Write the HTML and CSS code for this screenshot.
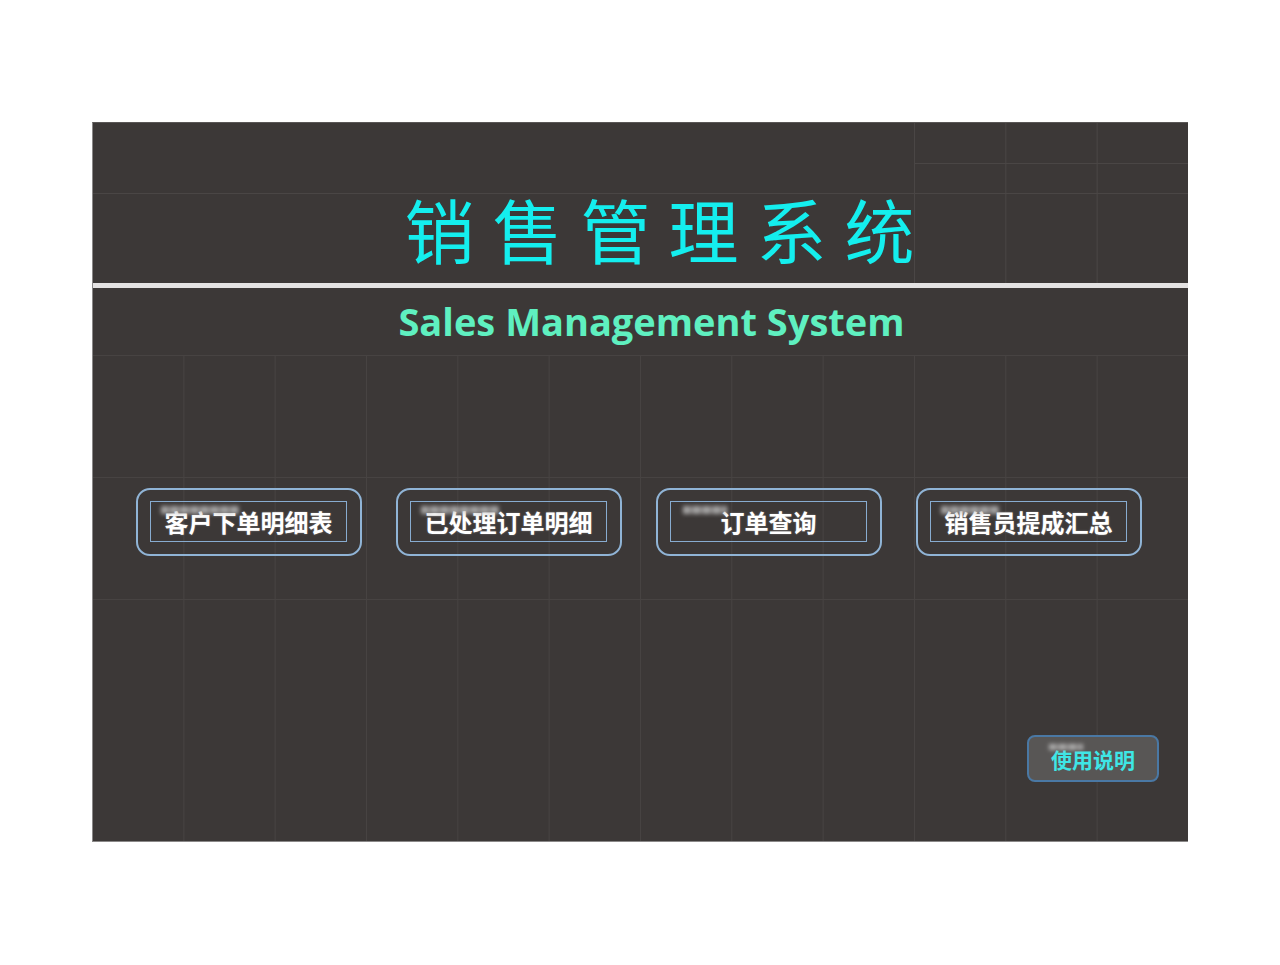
FILE: index.html
```html
<!DOCTYPE html>
<html lang="zh-CN">
<head>
<meta charset="utf-8">
<title>销售管理系统</title>
<link rel="stylesheet" href="styles.css">
</head>
<body>
<div class="panel">
  <header class="head">
    <div class="corner-grid"></div>
    <h1 class="title">销售管理系统</h1>
  </header>
  <div class="rule"></div>
  <div class="sub">
    <h2 class="subtitle">Sales Management System</h2>
  </div>
  <main class="body">
    <nav class="menu">
      <a class="btn"><span class="inner"><span class="ghost w1"></span>客户下单明细表</span></a>
      <a class="btn"><span class="inner"><span class="ghost w1"></span>已处理订单明细</span></a>
      <a class="btn"><span class="inner"><span class="ghost w2"></span>订单查询</span></a>
      <a class="btn"><span class="inner"><span class="ghost w3"></span>销售员提成汇总</span></a>
    </nav>
    <div class="help-row">
      <a class="help"><span class="ghost small"></span>使用说明</a>
    </div>
  </main>
</div>
</body>
</html>
```
FILE: styles.css
```css
* { box-sizing: border-box; }
html, body { margin: 0; padding: 0; background: #ffffff; }
body {
  font-family: "Noto Sans CJK SC", "Noto Sans", sans-serif;
  height: 965px;
  padding-top: 122px;
  padding-left: 92px;
}
.panel {
  width: 1096px;
  height: 720px;
  background: #3c3837;
  display: flex;
  flex-direction: column;
  border-left: 1px solid #8a8888;
  border-bottom: 1px solid #8a8888;
  border-top: 1px solid #5a5756;
}
.head {
  position: relative;
  height: 160px;
  display: flex;
  align-items: center;
  justify-content: center;
  background-image: linear-gradient(#4a4645, #4a4645);
  background-size: 100% 1px;
  background-position: 0 70px;
  background-repeat: no-repeat;
}
.corner-grid {
  position: absolute;
  right: 0;
  top: 0;
  width: 274px;
  height: 160px;
  background-image:
    linear-gradient(90deg, #4a4645 1px, transparent 1px),
    linear-gradient(#4a4645 1px, transparent 1px);
  background-size: 91.33px 100%, 100% 41px;
  background-repeat: repeat-x, no-repeat;
  background-position: 0 0, 0 40px;
}
.title {
  position: relative;
  margin: 0;
  padding-left: 56px;
  padding-top: 52px;
  font-weight: 400;
  font-size: 70px;
  line-height: 1;
  letter-spacing: 18px;
  color: #14eeee;
}
.rule {
  height: 5px;
  background: #e4e2e2;
}
.sub {
  height: 67px;
  display: flex;
  align-items: center;
  justify-content: center;
}
.subtitle {
  margin: 0;
  padding-left: 22px;
  padding-bottom: 2px;
  font-family: "Open Sans", "Noto Sans", sans-serif;
  font-weight: 700;
  font-size: 38px;
  line-height: 1;
  color: #5ff0c0;
}
.body {
  flex: 1;
  display: flex;
  flex-direction: column;
  background-image:
    linear-gradient(90deg, transparent 90.33px, #474342 90.33px, #474342 91.33px),
    linear-gradient(#474342 1px, transparent 1px),
    linear-gradient(#474342 1px, transparent 1px),
    linear-gradient(#474342 1px, transparent 1px);
  background-size: 91.33px 100%, 100% 1px, 100% 1px, 100% 1px;
  background-repeat: repeat-x, no-repeat, no-repeat, no-repeat;
  background-position: 0 0, 0 0, 0 122px, 0 244px;
}
.menu {
  display: flex;
  gap: 34px;
  padding-left: 43px;
  padding-top: 133px;
}
.btn {
  width: 226px;
  height: 68px;
  border: 2px solid #90b4d6;
  border-radius: 14px;
  padding: 11px 13px 12px 12px;
  display: flex;
}
.inner {
  position: relative;
  flex: 1;
  border: 1.5px solid #88acd0;
  display: flex;
  align-items: center;
  justify-content: center;
  font-weight: 700;
  font-size: 24px;
  color: #ffffff;
  text-shadow: 0 0 2px rgba(255,255,255,0.35);
}
.ghost {
  position: absolute;
  left: 10px;
  top: 4px;
  height: 8px;
  background: repeating-linear-gradient(90deg, #d4d4d4 0 7px, #9a9898 7px 10px);
  filter: blur(2px);
  opacity: 0.7;
}
.ghost.w1 { width: 78px; }
.ghost.w2 { width: 44px; left: 12px; }
.ghost.w3 { width: 58px; }
.help-row {
  display: flex;
  justify-content: flex-end;
  padding-right: 29px;
  padding-top: 179px;
}
.help {
  position: relative;
  width: 132px;
  height: 47px;
  border: 2px solid #4a78a4;
  border-radius: 8px;
  background: #585655;
  display: flex;
  align-items: center;
  justify-content: center;
  font-weight: 700;
  font-size: 21px;
  color: #3ee6e6;
  padding-top: 1px;
}
.ghost.small {
  left: 20px;
  top: 7px;
  width: 34px;
  height: 6px;
}
```
